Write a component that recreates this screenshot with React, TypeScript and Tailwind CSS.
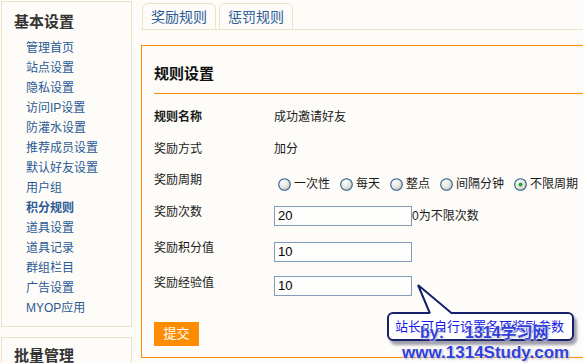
import React from 'react'

const font = 'font-["Liberation_Sans","Noto_Sans_CJK_SC",sans-serif]'

const menu = [
  '管理首页',
  '站点设置',
  '隐私设置',
  '访问IP设置',
  '防灌水设置',
  '推荐成员设置',
  '默认好友设置',
  '用户组',
  '积分规则',
  '道具设置',
  '道具记录',
  '群组栏目',
  '广告设置',
  'MYOP应用',
]

const periods = ['一次性', '每天', '整点', '间隔分钟', '不限周期']

function Radio({ checked }: { checked?: boolean }) {
  return (
    <svg width="13" height="13" viewBox="0 0 13 13" className="shrink-0">
      <defs>
        <radialGradient id="rg" cx="0.35" cy="0.3" r="0.8">
          <stop offset="0" stopColor="#ffffff" />
          <stop offset="0.6" stopColor="#e4e4dc" />
          <stop offset="1" stopColor="#b9b9ae" />
        </radialGradient>
      </defs>
      <circle cx="6.5" cy="6.5" r="5.8" fill="url(#rg)" stroke="#2d5d8a" strokeWidth="1.1" />
      {checked && <circle cx="6.5" cy="6.5" r="2" fill="#2aa52a" />}
    </svg>
  )
}

function TextInput({ value }: { value: string }) {
  return (
    <div className="w-[138px] h-[20px] border border-[#7f9db9] bg-[#fefefc] px-[3px] text-[13px] leading-[18px] text-black">
      {value}
    </div>
  )
}

function Row({ label, bold, h, pt, children }: { label: string; bold?: boolean; h: string; pt?: string; children: React.ReactNode }) {
  return (
    <div className={`flex ${h}`}>
      <div className={`w-[120px] shrink-0 leading-[20px] text-[12px] text-[#1a1a1a] ${bold ? 'font-bold' : ''}`}>{label}</div>
      <div className={`flex items-start text-[12px] leading-[20px] text-[#1a1a1a] ${pt ?? ''}`}>{children}</div>
    </div>
  )
}

export default function App() {
  return (
    <div className={`relative w-[583px] h-[363px] overflow-hidden bg-[#fdfcf8] ${font}`}>
      <div className="flex items-start">
        {/* 侧边栏 */}
        <div className="w-[131px] shrink-0 ml-px mt-px">
          <div className="border border-[#e9e4c6] pt-[10px] pb-[8px]">
            <h3 className="pl-[12px] text-[15px] font-bold leading-[20px] text-[#333] mb-[6px]">基本设置</h3>
            <ul className="pl-[24px]">
              {menu.map((m) => (
                <li
                  key={m}
                  className={`text-[12px] leading-[20px] text-[#2a5a95] ${m === '积分规则' ? 'font-bold' : ''}`}
                >
                  {m}
                </li>
              ))}
            </ul>
          </div>
          <div className="mt-[10px] border border-[#e9e4c6] pt-[8px] h-[60px]">
            <h3 className="pl-[12px] text-[15px] font-bold leading-[20px] text-[#333]">批量管理</h3>
          </div>
        </div>

        {/* 主体 */}
        <div className="ml-[9px] w-[470px] shrink-0">
          <div className="flex items-end gap-[3px] pl-px pt-[3px] border-b border-[#e9e4c6]">
            {['奖励规则', '惩罚规则'].map((t) => (
              <div
                key={t}
                className="w-[74px] h-[27px] -mb-px border border-[#e9e4c6] rounded-t-[6px] text-center text-[14px] leading-[26px] text-[#2c5d98]"
              >
                {t}
              </div>
            ))}
          </div>

          <div className="mt-[15px] border border-[#ff8c00] pl-[12px] pb-[11px] h-[313px]">
            <div className="pt-[18px] pb-[9px] border-b border-[#ff8c00]">
              <h2 className="text-[15px] font-bold leading-[20px] text-[#111]">规则设置</h2>
            </div>

            <div className="mt-[13px]">
              <Row label="规则名称" bold h="h-[32px]">成功邀请好友</Row>
              <Row label="奖励方式" h="h-[31px]">加分</Row>
              <Row label="奖励周期" h="h-[32px]" pt="pt-[4px]">
                <div className="flex items-center ml-[4px]">
                  {periods.map((p, i) => (
                    <div key={p} className={`flex items-center gap-[3px] ${i > 0 ? 'ml-[10px]' : ''}`}>
                      <Radio checked={i === 4} />
                      <span>{p}</span>
                    </div>
                  ))}
                </div>
              </Row>
              <Row label="奖励次数" h="h-[36px]" pt="pt-[4px]">
                <TextInput value="20" />
                <span className="leading-[20px]">0为不限次数</span>
              </Row>
              <Row label="奖励积分值" h="h-[35px]" pt="pt-[4px]">
                <TextInput value="10" />
              </Row>
              <Row label="奖励经验值" h="h-[23px]" pt="pt-[3px]">
                <TextInput value="10" />
              </Row>
            </div>

            <button className="mt-[26px] w-[45px] h-[24px] bg-[#ff8c00] text-white text-[13px] leading-[24px]">
              提交
            </button>
          </div>
        </div>
      </div>

      {/* 提示气泡 */}
      <div className="absolute left-[387px] top-[312px] w-[187px] h-[29px] rounded-[6px] border-2 border-[#17216b] bg-white shadow-[3px_4px_3px_rgba(80,80,110,0.55)] pl-[6px] text-[13px] leading-[25px] text-[#1616e8]">
        站长可自行设置各项奖励参数
      </div>
      <svg className="absolute left-[412px] top-[280px]" width="50" height="36" viewBox="0 0 50 36">
        <polygon points="6,5 18,34 40,34" fill="#ffffff" />
        <polyline points="18,33.5 6,5 40,33.5" fill="none" stroke="#17216b" strokeWidth="2" strokeLinejoin="miter" />
      </svg>

      {/* 水印 */}
      <div className="absolute left-[420px] top-[323px] flex text-[16px] font-bold leading-[20px] text-[#3040d8] [text-shadow:0_0_2px_#fff,0_0_2px_#fff,1px_1px_2px_#99a]">
        <span>by:</span>
        <span className="ml-[21px]">1314学习网</span>
      </div>
      <div className="absolute left-[402px] top-[343px] text-[17px] font-bold leading-[20px] text-[#3040d8] [text-shadow:0_0_2px_#fff,0_0_2px_#fff,1px_1px_2px_#99a]">
        www.1314Study.com
      </div>
    </div>
  )
}
